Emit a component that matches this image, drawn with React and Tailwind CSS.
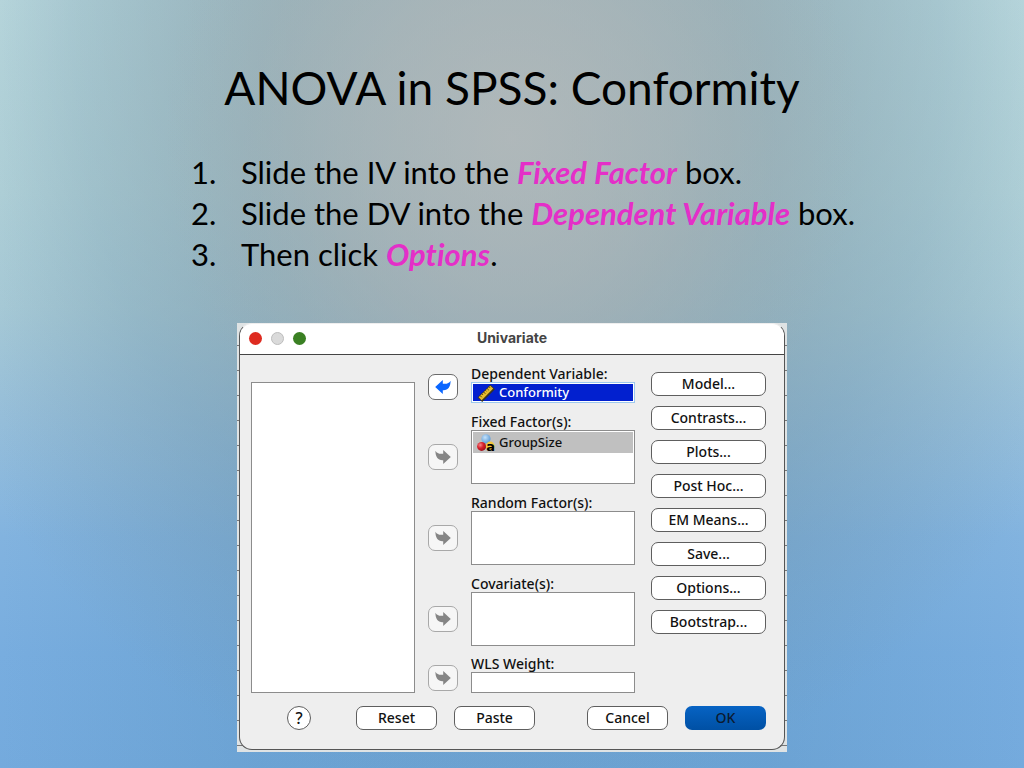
const steps = [
  { before: 'Slide the IV into the ', key: 'Fixed Factor', after: ' box.' },
  { before: 'Slide the DV into the ', key: 'Dependent Variable', after: ' box.' },
  { before: 'Then click ', key: 'Options', after: '.' },
];

const targets = [
  { id: 'dependent', label: 'Dependent Variable:', type: 'single' },
  { id: 'fixed', label: 'Fixed Factor(s):', type: 'list', item: 'GroupSize' },
  { id: 'random', label: 'Random Factor(s):', type: 'list' },
  { id: 'covariate', label: 'Covariate(s):', type: 'list' },
  { id: 'wls', label: 'WLS Weight:', type: 'input' },
];

const dialogs = ['Model...', 'Contrasts...', 'Plots...', 'Post Hoc...', 'EM Means...', 'Save...', 'Options...', 'Bootstrap...'];

function Arrow({ back }) {
  return (
    <svg className={back ? 'w-4 h-4 text-[#0a66ff] -scale-x-100' : 'w-4 h-4 text-[#858585]'} viewBox="0 0 16 16" fill="currentColor" aria-hidden="true">
      <path d="M0.4 1.8 C2 4.6 4.6 5.2 8.2 4.7 L8.2 1 L15.8 8 L8.2 15 L8.2 11.2 C3 11.6 0.4 8 0.4 1.8 Z" />
    </svg>
  );
}

function RulerIcon() {
  return (
    <svg className="w-[18px] h-[18px] shrink-0" viewBox="0 0 18 18" aria-hidden="true">
      <g transform="rotate(-45 9 9)">
        <rect x="0" y="6.2" width="18" height="6.4" fill="#3b3520" />
        <rect x="0.8" y="6.8" width="16.4" height="4.2" fill="#e8bd2c" />
        <path d="M3 6.6v2.4M5.5 6.6v1.6M8 6.6v2.4M10.5 6.6v1.6M13 6.6v2.4M15.5 6.6v1.6" stroke="#4a3c10" strokeWidth="0.9" />
      </g>
    </svg>
  );
}

function NominalIcon() {
  return (
    <svg className="w-[18px] h-[18px] shrink-0 overflow-visible" viewBox="0 0 18 18" aria-hidden="true">
      <defs>
        <radialGradient id="blueBall" cx="0.4" cy="0.35" r="0.65">
          <stop offset="0" stopColor="#c6e2fa" />
          <stop offset="1" stopColor="#5c9bd6" />
        </radialGradient>
        <radialGradient id="redBall" cx="0.35" cy="0.35" r="0.7">
          <stop offset="0" stopColor="#f58a8a" />
          <stop offset="0.5" stopColor="#d8202c" />
          <stop offset="1" stopColor="#9c1018" />
        </radialGradient>
      </defs>
      <circle cx="9" cy="4.8" r="4.6" fill="url(#blueBall)" />
      <circle cx="4.6" cy="12.4" r="4.5" fill="url(#redBall)" />
      <circle cx="13.2" cy="12" r="4.4" fill="#f3c73c" />
      <text x="9.2" y="16.5" fontSize="13" fontWeight="700" fontFamily="'DejaVu Sans', sans-serif" fill="#000">a</text>
    </svg>
  );
}

function Target({ id, label, type, item }) {
  const active = type === 'single';
  return (
    <div className="flex gap-[13px]">
      <div className={type === 'list' ? 'pt-[31px]' : 'pt-[9px]'}>
        <button
          type="button"
          aria-label={`Move ${label}`}
          className={`flex h-[26px] w-[30px] items-center justify-center rounded-[7px] border ${active ? 'border-[#6b6b6b] bg-white' : 'border-[#a8a8a8] bg-[#f6f6f6]'}`}
        >
          <Arrow back={active} />
        </button>
      </div>
      <div className="min-w-0 flex-1">
        {type === 'input' ? (
          <label htmlFor={id} className="block h-4 text-sm leading-4 whitespace-nowrap">{label}</label>
        ) : (
          <div id={id} className="h-[17px] text-sm leading-[17px] whitespace-nowrap">{label}</div>
        )}
        {type === 'single' && (
          <div role="listbox" aria-labelledby={id} className="h-[21px] border border-[#9cc8ee] bg-white p-px">
            <div role="option" aria-selected="true" className="flex h-[17px] items-center gap-1 bg-[#0220cf] pl-1 text-[13px] text-white">
              <RulerIcon />
              Conformity
            </div>
          </div>
        )}
        {type === 'list' && (
          <div role="listbox" aria-labelledby={id} className="h-[54px] border border-[#8c8c8c] bg-white p-px">
            {item && (
              <div role="option" aria-selected="true" className="flex h-[21px] items-center gap-1 bg-[#c0c0c0] pl-1 text-[13px]">
                <NominalIcon />
                {item}
              </div>
            )}
          </div>
        )}
        {type === 'input' && <input id={id} type="text" className="block h-[21px] w-full border border-[#8c8c8c] bg-white px-1 text-sm" />}
      </div>
    </div>
  );
}

function Button({ children, className = 'w-[81px]' }) {
  return (
    <button type="button" className={`h-6 rounded-[7px] border border-[#5e5e5e] bg-white text-sm leading-[20px] ${className}`}>
      {children}
    </button>
  );
}

function UnivariateDialog() {
  return (
    <div className="mx-auto w-full max-w-[550px] bg-[#dfe3e4] bg-[repeating-linear-gradient(to_bottom,transparent_0_22px,#777_22px_23px,transparent_23px_25px)] px-0.5 pb-0.5">
      <section className="overflow-hidden rounded-[13px] border border-[#555] border-t-[#eee] bg-[#eeeeee] font-['Noto_Sans',sans-serif] font-medium text-[#111]">
        <header className="grid h-[31px] grid-cols-[1fr_auto_1fr] items-center border-b border-[#444] bg-white px-[9px] pb-0.5">
          <div className="flex gap-[9px]">
            <span className="h-[13px] w-[13px] rounded-full bg-[#de2b20]" />
            <span className="h-[13px] w-[13px] rounded-full border border-[#bdbdbd] bg-[#dadada]" />
            <span className="h-[13px] w-[13px] rounded-full bg-[#3a8023]" />
          </div>
          <h2 className="font-['Inter',sans-serif] text-sm font-bold text-[#444]">Univariate</h2>
        </header>

        <div className="flex pt-[10px] pr-[18px] pl-[11px]">
          <div className="mr-[13px] flex pt-[17px]">
            <div role="listbox" aria-label="Variables" className="w-[164px] border border-[#8c8c8c] bg-white" />
          </div>
          <div className="mr-auto flex w-[207px] flex-col gap-[10px]">
            {targets.map((t) => (
              <Target key={t.id} {...t} />
            ))}
          </div>
          <div className="flex w-[115px] flex-col gap-[10px] pt-[7px]">
            {dialogs.map((d) => (
              <Button key={d} className="w-full">{d}</Button>
            ))}
          </div>
        </div>

        <footer className="flex items-center justify-between pt-[13px] pr-[18px] pb-[19px] pl-[47px]">
          <div className="flex items-center">
            <button type="button" className="mr-[45px] h-6 w-6 rounded-full border border-[#5e5e5e] bg-white text-base leading-[22px]">?</button>
            <div className="flex gap-[17px]">
              <Button>Reset</Button>
              <Button>Paste</Button>
            </div>
          </div>
          <div className="flex gap-[17px]">
            <Button>Cancel</Button>
            <button type="button" className="h-6 w-[81px] rounded-[7px] bg-linear-to-b from-[#0763c4] to-[#0050a4] text-sm leading-[20px] text-[#0b1a30]">OK</button>
          </div>
        </footer>
      </section>
    </div>
  );
}

export default function App() {
  return (
    <main className="min-h-screen bg-[radial-gradient(ellipse_34%_50%_at_50%_18%,#b9bcbcb3_0%,#b4b9ba80_40%,#a9b3b633_75%,#a9b3b600_100%),radial-gradient(ellipse_62%_95%_at_50%_10%,#939fa2a6_0%,#8c9ba094_35%,#7893a04d_68%,#78939f00_100%),linear-gradient(to_right,#4682aa00_0%,#4682aa30_25%,#4682aa30_75%,#4682aa00_100%),linear-gradient(to_bottom,#c2e2e7_0%,#b8dae1_25%,#acd0dd_40%,#98c1dd_54%,#82b3df_70%,#78addf_85%,#74aadd_100%)] px-4 pt-14 pb-4 font-['Lato',sans-serif] text-black [font-variant-ligatures:none]">
      <h1 className="text-center text-[46px] leading-[64px]">ANOVA in SPSS: Conformity</h1>
      <ol className="mx-auto mt-8 w-fit pl-[22px] text-[31px] leading-[41px]">
        {steps.map((s, i) => (
          <li key={s.key} className="flex">
            <span className="w-[50px] shrink-0">{i + 1}.</span>
            <p>
              {s.before}
              <em className="font-bold text-[#e42fc8]">{s.key}</em>
              {s.after}
            </p>
          </li>
        ))}
      </ol>
      <div className="mt-12">
        <UnivariateDialog />
      </div>
    </main>
  );
}
